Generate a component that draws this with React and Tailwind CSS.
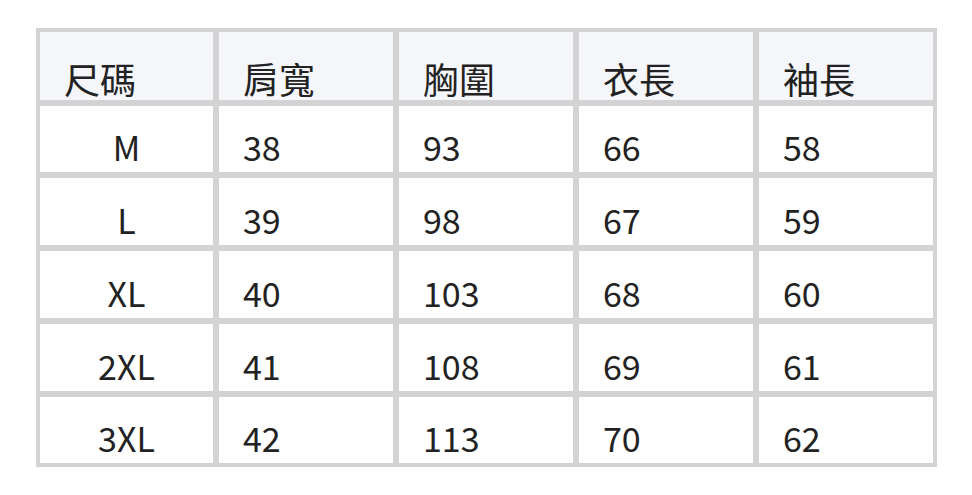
export default function App() {
  const header = ["尺碼", "肩寬", "胸圍", "衣長", "袖長"];
  const rows = [
    ["M", "38", "93", "66", "58"],
    ["L", "39", "98", "67", "59"],
    ["XL", "40", "103", "68", "60"],
    ["2XL", "41", "108", "69", "61"],
    ["3XL", "42", "113", "70", "62"],
  ];
  const rowH = ["h-[66px]", "h-[67px]", "h-[67px]", "h-[67px]", "h-[66px]"];
  return (
    <div
      className="w-[972px] h-[495px] bg-white pt-[28px] pl-[36px]"
      style={{ fontFamily: '"Noto Sans CJK TC", "Noto Sans", sans-serif' }}
    >
      <div className="w-[901px] bg-[#d3d3d3] p-[4px] grid grid-cols-[173px_174px_174px_174px_174px] gap-[6px] text-[34px] text-[#222222]">
        {header.map((h) => (
          <div key={h} className="h-[68px] bg-[#f5f6fa] flex items-end pl-6 pb-[4px]">
            <span className="leading-none text-[36px]">{h}</span>
          </div>
        ))}
        {rows.map((r, i) =>
          r.map((c, j) => (
            <div
              key={i + "-" + j}
              className={
                rowH[i] +
                " bg-white flex items-end pb-[8px] " +
                (j === 0 ? "justify-center" : "pl-6")
              }
            >
              <span className="leading-none">{c}</span>
            </div>
          ))
        )}
      </div>
    </div>
  );
}
